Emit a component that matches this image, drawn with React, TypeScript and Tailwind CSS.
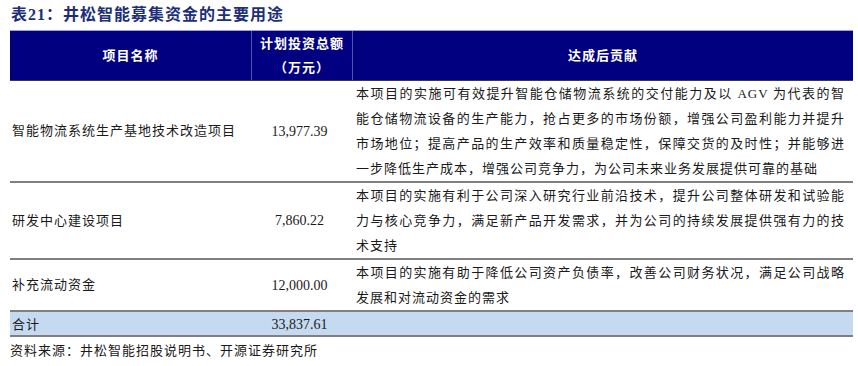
import React from "react";

const cjk = { fontFamily: '"Liberation Serif", "Noto Sans CJK SC", serif' };

function Desc({ lines }: { lines: string[] }) {
  return (
    <div className="pl-[3px] pr-[8px] text-[13px] tracking-[1px] leading-[25px] text-[#1a1a1a]">
      {lines.map((l, i) => (
        <div
          key={i}
          className={i < lines.length - 1 ? "text-justify [text-align-last:justify] whitespace-nowrap overflow-hidden" : "whitespace-nowrap"}
        >
          {l}
        </div>
      ))}
    </div>
  );
}

function Row({
  name,
  amount,
  lines,
}: {
  name: string;
  amount: string;
  lines: string[];
}) {
  return (
    <div className="grid grid-cols-[241px_102px_500px] border-b-2 border-[#808080]">
      <div className="flex items-center pl-[2px] text-[13px] tracking-[1px] text-[#1a1a1a]">{name}</div>
      <div className="flex items-center justify-center pr-[5px] text-[14px] text-[#1a1a1a]">{amount}</div>
      <Desc lines={lines} />
    </div>
  );
}

export default function App() {
  return (
    <div className="w-[858px] h-[366px] bg-white overflow-hidden" style={cjk}>
      <div className="h-[30px] pl-[11px] pt-[4px] text-[16px] font-bold leading-[22px] tracking-[1px] text-[#1e2f7a]">
        表21：井松智能募集资金的主要用途
      </div>
      <div className="ml-[10px] w-[843px]">
        <div className="grid grid-cols-[241px_102px_500px] h-[51px] bg-[#000080] border-t border-[#a0a0d0] border-b border-b-[#3a3a3a] text-white font-bold text-[13px] tracking-[1px]">
          <div className="flex items-center justify-center">项目名称</div>
          <div className="flex flex-col items-center justify-center leading-[24px] border-l border-[#5656a6] border-r border-r-[#5656a6]">
            <div>计划投资总额</div>
            <div>（万元）</div>
          </div>
          <div className="flex items-center justify-center">达成后贡献</div>
        </div>
        <Row
          name="智能物流系统生产基地技术改造项目"
          amount="13,977.39"
          lines={[
            "本项目的实施可有效提升智能仓储物流系统的交付能力及以 AGV 为代表的智",
            "能仓储物流设备的生产能力，抢占更多的市场份额，增强公司盈利能力并提升",
            "市场地位；提高产品的生产效率和质量稳定性，保障交货的及时性；并能够进",
            "一步降低生产成本，增强公司竞争力，为公司未来业务发展提供可靠的基础",
          ]}
        />
        <Row
          name="研发中心建设项目"
          amount="7,860.22"
          lines={[
            "本项目的实施有利于公司深入研究行业前沿技术，提升公司整体研发和试验能",
            "力与核心竞争力，满足新产品开发需求，并为公司的持续发展提供强有力的技",
            "术支持",
          ]}
        />
        <Row
          name="补充流动资金"
          amount="12,000.00"
          lines={[
            "本项目的实施有助于降低公司资产负债率，改善公司财务状况，满足公司战略",
            "发展和对流动资金的需求",
          ]}
        />
        <div className="grid grid-cols-[241px_102px_500px] h-[25px] bg-[#c5d9f1] border-b-2 border-[#808080] leading-[25px]">
          <div className="pl-[2px] text-[13px] tracking-[1px] text-[#1a1a1a]">合计</div>
          <div className="text-center pr-[5px] text-[14px] text-[#1a1a1a]">33,837.61</div>
          <div />
        </div>
      </div>
      <div className="pl-[10px] pt-[1px] text-[13px] tracking-[1px] leading-[25px] text-[#1a1a1a]">
        资料来源：井松智能招股说明书、开源证券研究所
      </div>
    </div>
  );
}
